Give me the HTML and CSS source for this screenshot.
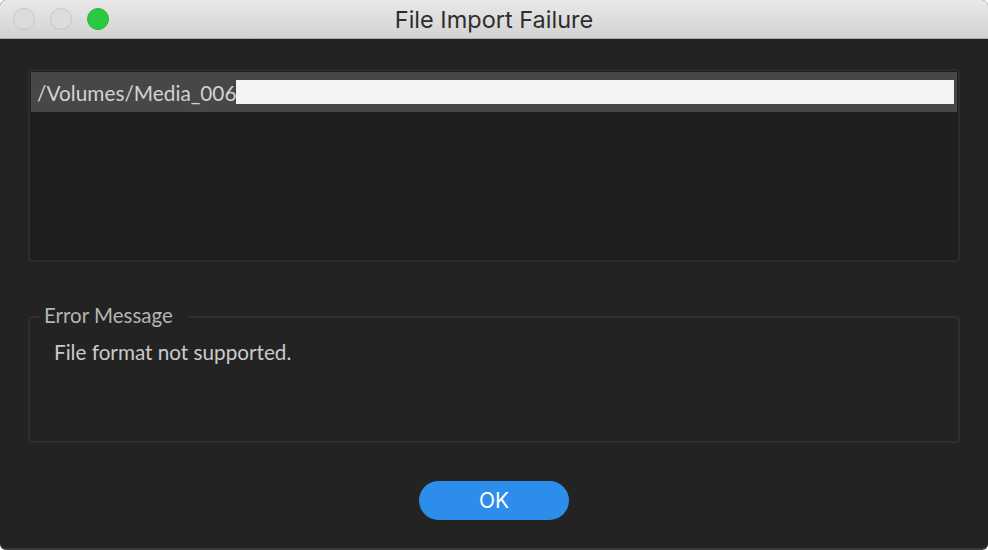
FILE: index.html
```html
<!DOCTYPE html>
<html>
<head>
<meta charset="utf-8">
<link rel="stylesheet" href="styles.css">
</head>
<body>
<div class="window">
  <div class="titlebar">
    <div class="lights">
      <span class="light light-gray"></span>
      <span class="light light-gray"></span>
      <span class="light light-green"></span>
    </div>
    <div class="title">File Import Failure</div>
  </div>
  <div class="content">
    <div class="filelist">
      <div class="row">
        <span class="path">/Volumes/Media_006</span>
        <span class="redact"></span>
      </div>
    </div>
    <fieldset class="group">
      <legend class="legend">Error Message</legend>
      <div class="message">File format not supported.</div>
    </fieldset>
    <div class="actions">
      <button class="ok">OK</button>
    </div>
  </div>
</div>
</body>
</html>
```

FILE: styles.css
```css
html, body {
  margin: 0;
  padding: 0;
  background: #ffffff;
}
.window {
  width: 988px;
  height: 550px;
  background: #232323;
  border-radius: 6px;
  overflow: hidden;
  display: flex;
  flex-direction: column;
  box-sizing: border-box;
  border-bottom: 2px solid #3a3a3a;
}
.titlebar {
  height: 39px;
  flex: none;
  box-sizing: border-box;
  background: linear-gradient(#e9e9e9, #d2d2d2);
  border-bottom: 1px solid #ababab;
  display: flex;
  align-items: center;
  position: relative;
}
.lights {
  display: flex;
  gap: 15px;
  padding-left: 13px;
}
.light {
  width: 22px;
  height: 22px;
  border-radius: 50%;
  box-sizing: border-box;
}
.light-gray {
  background: #dcdcdc;
  border: 1px solid #c6c6c6;
}
.light-green {
  background: #2bc840;
  border: 1px solid #27b53a;
}
.title {
  position: absolute;
  left: 0;
  right: 0;
  top: 0;
  bottom: 0;
  display: flex;
  align-items: center;
  justify-content: center;
  font-family: "Inter", "Liberation Sans", sans-serif;
  font-size: 23.5px;
  color: #2e2e2e;
  pointer-events: none;
}
.content {
  flex: 1;
  display: flex;
  flex-direction: column;
  padding: 30px 28px 0 28px;
  font-family: "Lato", "Liberation Sans", sans-serif;
}
.filelist {
  height: 193px;
  box-sizing: border-box;
  border: 2px solid #2c2c2c;
  border-radius: 4px;
  background: #1e1e1e;
  padding: 1px 1px;
}
.row {
  height: 40px;
  background: #474747;
  display: flex;
  align-items: center;
  padding: 0 3px 0 6px;
}
.path {
  font-size: 20.8px;
  color: #d2d2d2;
  white-space: nowrap;
}
.redact {
  flex: 1;
  height: 24px;
  background: #f4f4f4;
  margin-bottom: 1px;
}
.group {
  margin: 43px 0 0 0;
  padding: 0;
  height: 138px;
  box-sizing: border-box;
  border: 2px solid #2f2f2f;
  border-radius: 4px;
  min-width: 0;
}
.legend {
  margin-left: 10px;
  padding: 0 16px 0 4px;
  font-size: 20.5px;
  color: #b4b4b4;
  position: relative;
  top: -2px;
}
.message {
  font-size: 20.7px;
  color: #cacaca;
  padding: 11px 0 0 24px;
}
.actions {
  display: flex;
  justify-content: center;
  padding-top: 38px;
}
.ok {
  width: 150px;
  height: 39px;
  border: none;
  border-radius: 20px;
  background: #2d8deb;
  color: #ffffff;
  font-family: "Inter", "Liberation Sans", sans-serif;
  font-size: 21px;
  padding: 0;
}
```
